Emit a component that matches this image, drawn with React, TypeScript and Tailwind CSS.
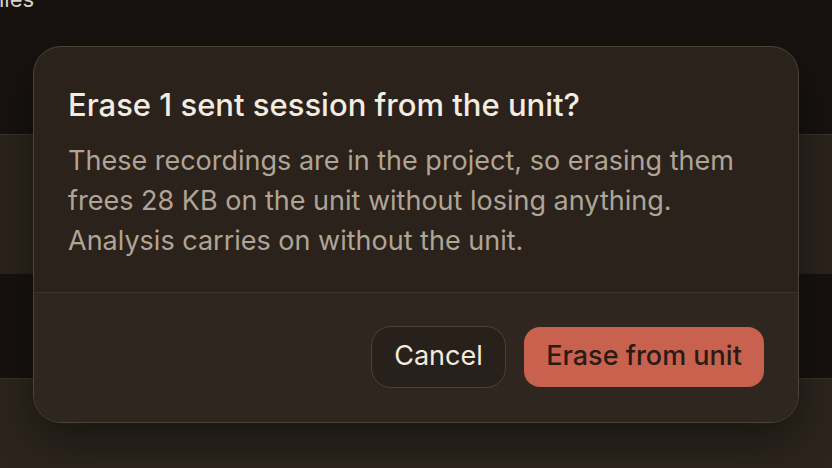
import React from 'react';

const font = { fontFamily: 'Inter, "Noto Sans", sans-serif' };

const BackgroundList: React.FC = () => (
  <div className="flex flex-col">
    <div className="h-[134px] bg-[#17120f]">
      <p className="-mt-[17px] -ml-[14px] text-[22px] text-[#d9d1c5]">Files</p>
    </div>
    <div className="h-[139px] border-t border-[#3a3129] bg-[#2b231c]" />
    <div className="h-[105px] border-t border-[#2a221b] bg-[#16110e]" />
    <div className="h-[90px] border-t border-[#3a3129] bg-[#2c241d]" />
  </div>
);

const ConfirmDialog: React.FC = () => (
  <div className="w-[766px] overflow-hidden rounded-[28px] border border-[#4b4238] bg-[#2a221b] shadow-[0_18px_44px_rgba(0,0,0,0.4)]">
    <div className="px-[34px] pt-[39px] pb-[31px]">
      <h2 className="text-[31px] font-medium leading-[37px] text-[#f3ece1]">
        Erase 1 sent session from the unit?
      </h2>
      <p className="mt-[18px] text-[27px] leading-[40px] text-[#afa596]">
        These recordings are in the project, so erasing them
        <br />
        frees 28 KB on the unit without losing anything.
        <br />
        Analysis carries on without the unit.
      </p>
    </div>
    <div className="flex items-center justify-end gap-[18px] border-t border-[#3e352c] bg-[#2f271f] px-[34px] pt-[33px] pb-[34px]">
      <button className="h-[62px] w-[135px] rounded-[20px] border border-[#4b4238] bg-[#28201a] text-[27px] text-[#f2ebdf]">
        Cancel
      </button>
      <button className="h-[60px] w-[240px] rounded-[16px] bg-[#c9614f] text-[27px] font-medium text-[#2a1c15]">
        Erase from unit
      </button>
    </div>
  </div>
);

export default function App() {
  return (
    <div className="relative h-[468px] w-[832px] overflow-hidden bg-[#17120f]" style={font}>
      <BackgroundList />
      <div className="absolute inset-0 flex items-center justify-center">
        <ConfirmDialog />
      </div>
    </div>
  );
}
